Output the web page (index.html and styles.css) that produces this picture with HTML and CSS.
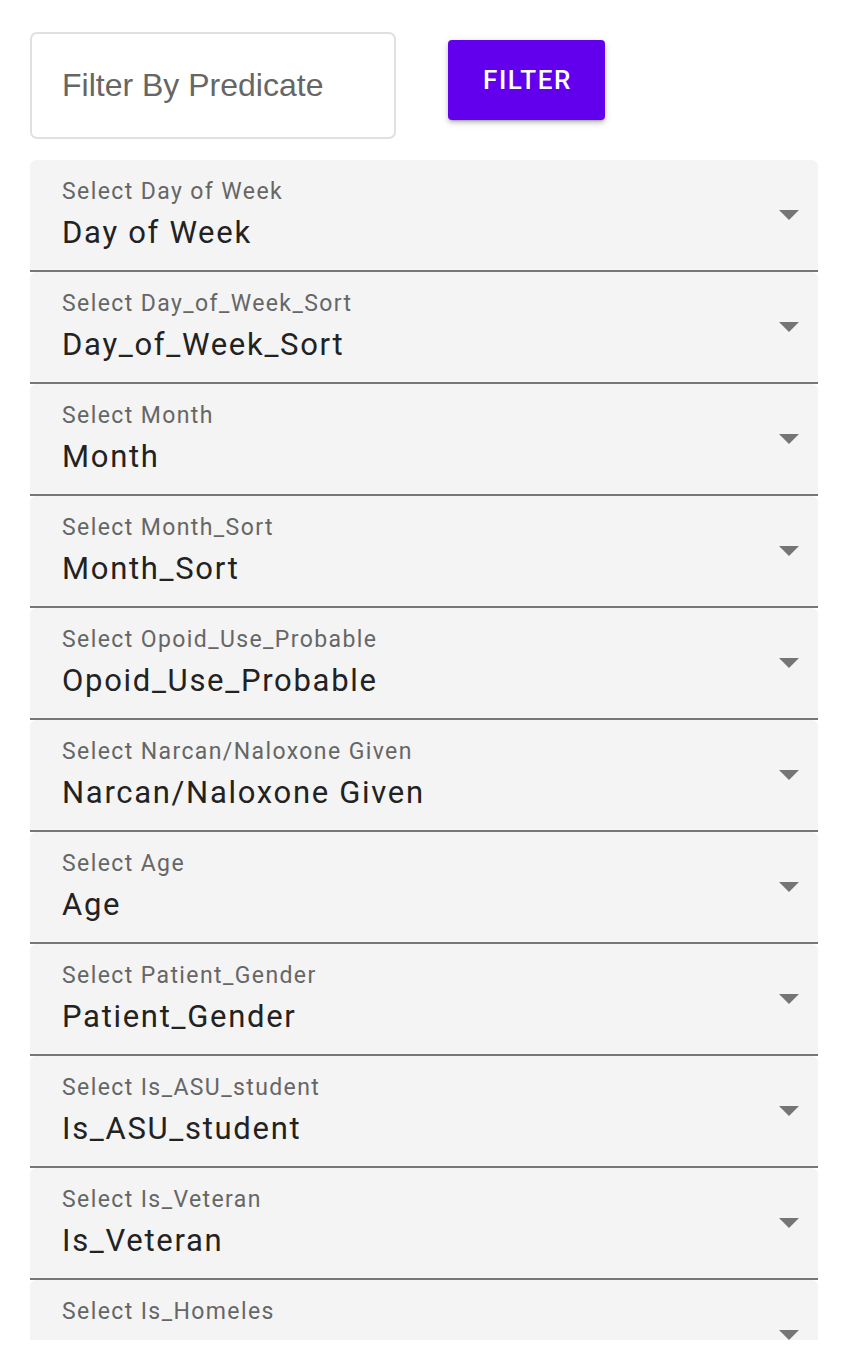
FILE: index.html
```html
<!DOCTYPE html>
<html>
<head>
<meta charset="utf-8">
<link rel="stylesheet" href="styles.css">
</head>
<body>
<div class="page">
  <div class="toolbar">
    <input class="predicate" type="text" placeholder="Filter By Predicate">
    <button class="filter-btn">FILTER</button>
  </div>
  <div class="selects">
    <div class="select"><div class="texts"><div class="label">Select Day of Week</div><div class="value">Day of Week</div></div><svg class="arrow" viewBox="0 0 20 10"><polygon points="0,0 20,0 10,10"/></svg></div>
    <div class="select"><div class="texts"><div class="label">Select Day_of_Week_Sort</div><div class="value">Day_of_Week_Sort</div></div><svg class="arrow" viewBox="0 0 20 10"><polygon points="0,0 20,0 10,10"/></svg></div>
    <div class="select"><div class="texts"><div class="label">Select Month</div><div class="value">Month</div></div><svg class="arrow" viewBox="0 0 20 10"><polygon points="0,0 20,0 10,10"/></svg></div>
    <div class="select"><div class="texts"><div class="label">Select Month_Sort</div><div class="value">Month_Sort</div></div><svg class="arrow" viewBox="0 0 20 10"><polygon points="0,0 20,0 10,10"/></svg></div>
    <div class="select"><div class="texts"><div class="label">Select Opoid_Use_Probable</div><div class="value">Opoid_Use_Probable</div></div><svg class="arrow" viewBox="0 0 20 10"><polygon points="0,0 20,0 10,10"/></svg></div>
    <div class="select"><div class="texts"><div class="label">Select Narcan/Naloxone Given</div><div class="value">Narcan/Naloxone Given</div></div><svg class="arrow" viewBox="0 0 20 10"><polygon points="0,0 20,0 10,10"/></svg></div>
    <div class="select"><div class="texts"><div class="label">Select Age</div><div class="value">Age</div></div><svg class="arrow" viewBox="0 0 20 10"><polygon points="0,0 20,0 10,10"/></svg></div>
    <div class="select"><div class="texts"><div class="label">Select Patient_Gender</div><div class="value">Patient_Gender</div></div><svg class="arrow" viewBox="0 0 20 10"><polygon points="0,0 20,0 10,10"/></svg></div>
    <div class="select"><div class="texts"><div class="label">Select Is_ASU_student</div><div class="value">Is_ASU_student</div></div><svg class="arrow" viewBox="0 0 20 10"><polygon points="0,0 20,0 10,10"/></svg></div>
    <div class="select"><div class="texts"><div class="label">Select Is_Veteran</div><div class="value">Is_Veteran</div></div><svg class="arrow" viewBox="0 0 20 10"><polygon points="0,0 20,0 10,10"/></svg></div>
    <div class="select"><div class="texts"><div class="label">Select Is_Homeles</div><div class="value">Is_Homeles</div></div><svg class="arrow" viewBox="0 0 20 10"><polygon points="0,0 20,0 10,10"/></svg></div>
  </div>
</div>
</body>
</html>
```
FILE: styles.css
```css
html, body {
  margin: 0;
  padding: 0;
  background: #ffffff;
}

.page {
  height: 1340px;
  overflow: hidden;
  padding: 32px 26px 0 30px;
  box-sizing: border-box;
  font-family: Roboto, "Noto Sans", sans-serif;
}

.toolbar {
  display: flex;
  align-items: flex-start;
  gap: 52px;
}

.predicate {
  width: 366px;
  height: 107px;
  box-sizing: border-box;
  margin: 0;
  border: 2px solid #e0e0e0;
  border-radius: 7px;
  padding: 0 0 0 30px;
  font-family: "Liberation Sans", Arial, sans-serif;
  font-size: 32px;
  color: #333;
  background: #fff;
  outline: none;
}

.predicate::placeholder {
  color: #666666;
  opacity: 1;
}

.filter-btn {
  margin-top: 8px;
  width: 157px;
  height: 80px;
  border: none;
  border-radius: 4px;
  background: #6200ee;
  color: #ffffff;
  font-family: Roboto, sans-serif;
  font-weight: 500;
  font-size: 26px;
  letter-spacing: 1.6px;
  display: flex;
  align-items: center;
  justify-content: center;
  padding: 0 0 0 2px;
  box-shadow: 0 3px 2px -2px rgba(0,0,0,0.2), 0 3px 4px 0 rgba(0,0,0,0.14), 0 2px 8px 0 rgba(0,0,0,0.12);
}

.selects {
  margin-top: 21px;
  display: flex;
  flex-direction: column;
}

.select {
  height: 112px;
  box-sizing: border-box;
  background: #f4f4f4;
  border-bottom: 2px solid #777777;
  border-radius: 6px 6px 0 0;
  display: flex;
  align-items: center;
  padding: 0 19px 0 32px;
}

.texts {
  flex: 1;
  align-self: flex-start;
  padding-top: 19px;
}

.label {
  font-size: 23px;
  line-height: 26px;
  letter-spacing: 1.4px;
  color: #666666;
}

.value {
  margin-top: 10px;
  font-size: 31px;
  line-height: 36px;
  letter-spacing: 1.7px;
  color: #222222;
}

.arrow {
  width: 20px;
  height: 10px;
  fill: #757575;
}
```
